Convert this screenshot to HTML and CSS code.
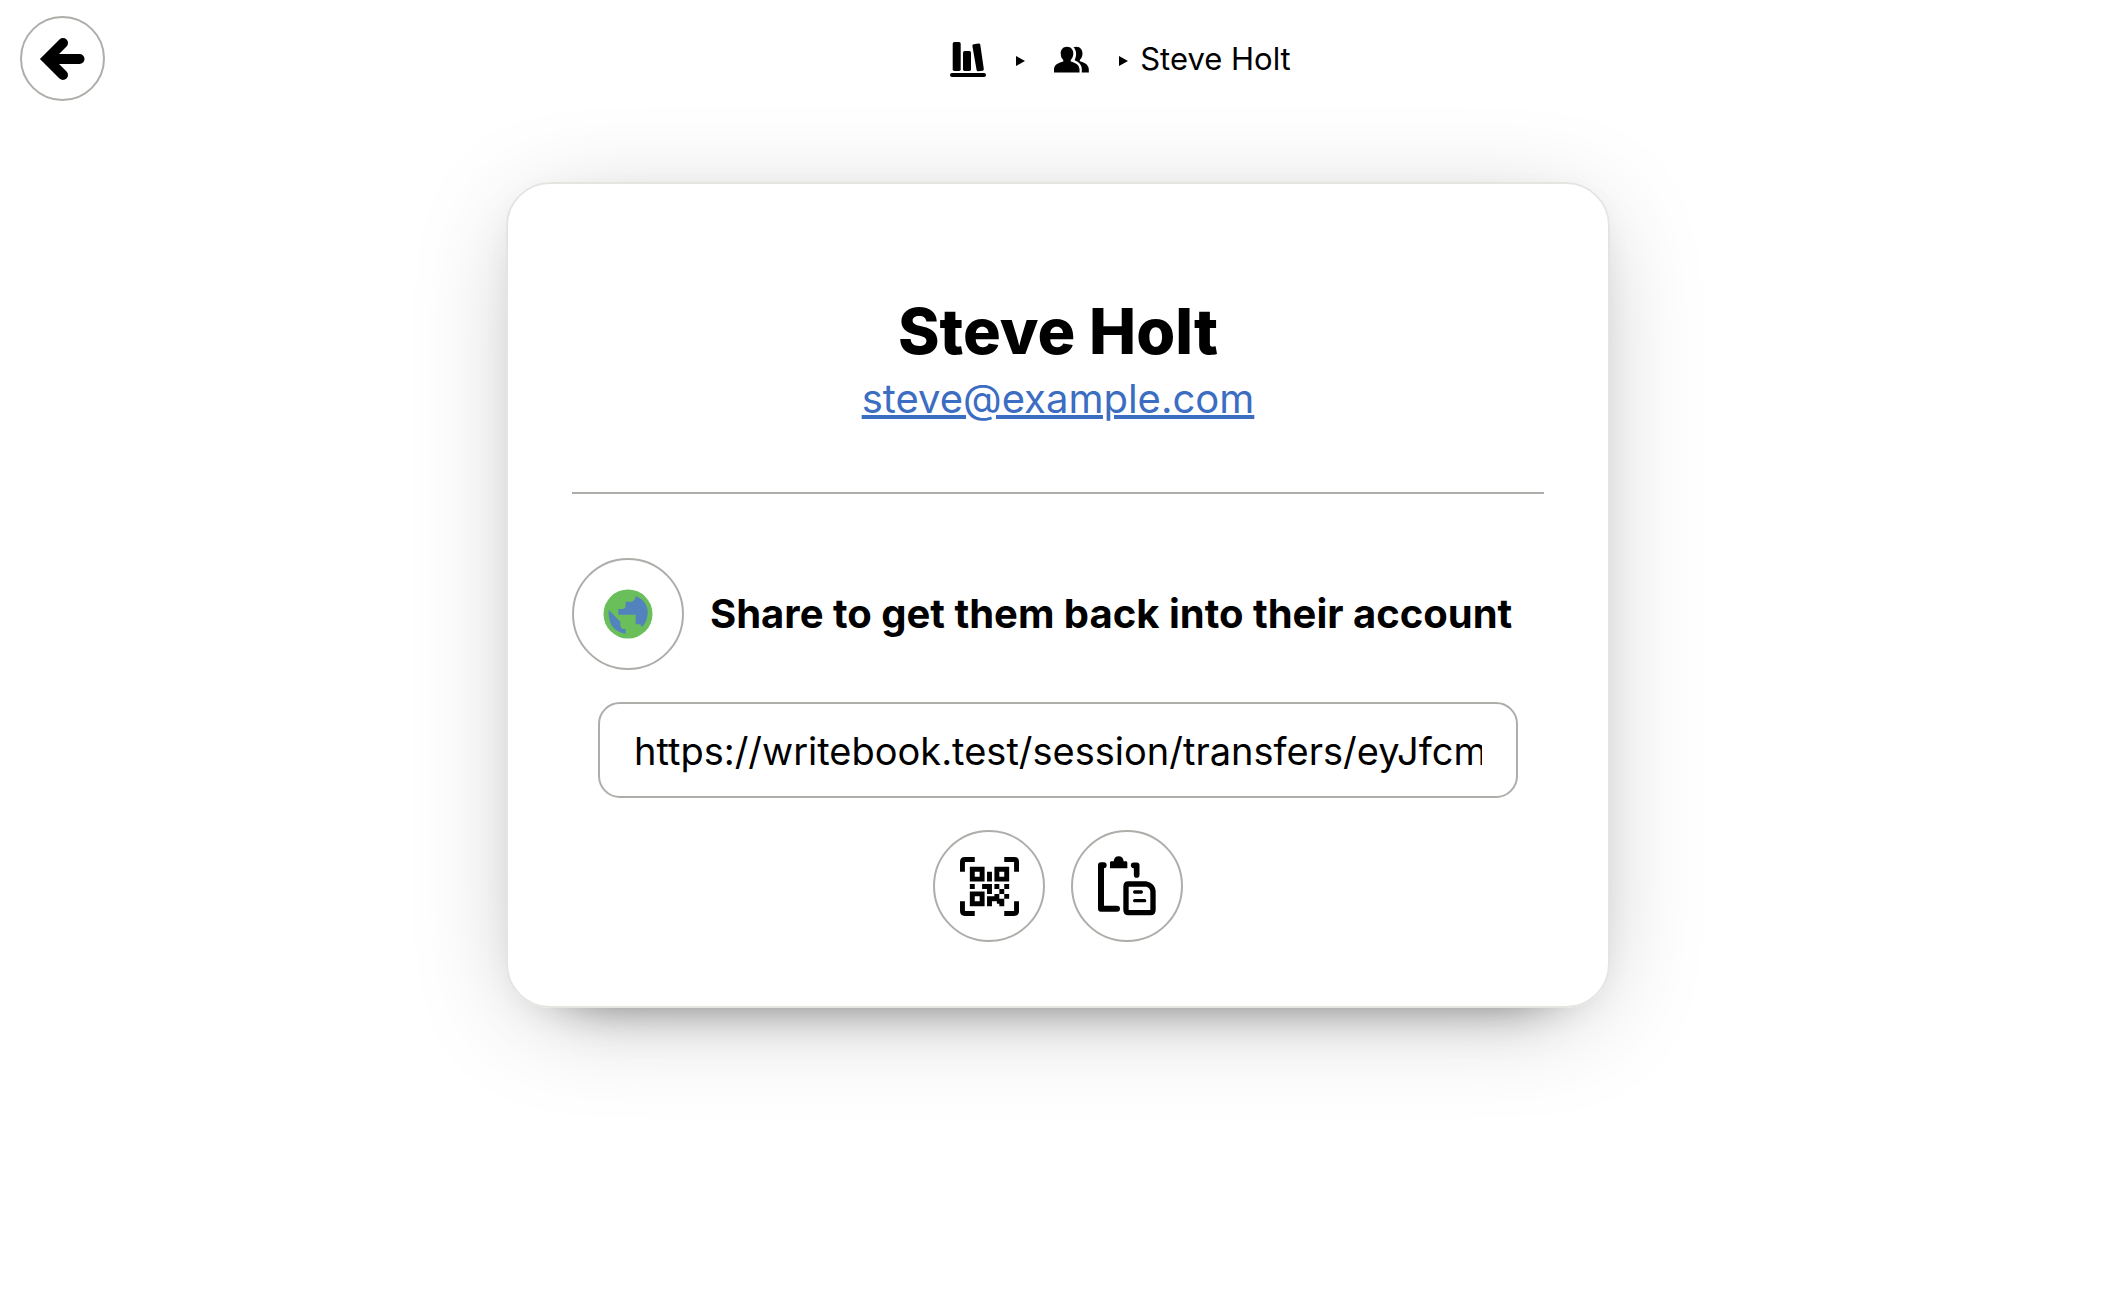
FILE: index.html
```html
<!DOCTYPE html>
<html lang="en">
<head>
  <meta charset="UTF-8">
  <meta name="viewport" content="width=device-width, initial-scale=1.0">
  <title>Steve Holt</title>
  <link rel="stylesheet" href="styles.css">
</head>
<body>
  <header class="header">
    <a href="#" class="btn btn-back" aria-label="Go back">
      <svg width="48" height="48" viewBox="0 0 48 48" fill="none" stroke="currentColor" stroke-width="10" stroke-linecap="round">
        <path d="M24 8 8 24l16 16M12 24h28.500"/>
      </svg>
    </a>
    <nav class="breadcrumbs">
      <a href="#" class="crumb" aria-label="Library">
        <svg width="44" height="44" viewBox="0 0 44 44" fill="currentColor">
          <rect x="6.700" y="5" width="8" height="29" rx="1.700"/>
          <rect x="17" y="14" width="8" height="20" rx="1.700"/>
          <path d="M27.800 7.200 32.500 6.500q1.600-.2 1.800 1.300l3.500 24.200q.2 1.500-1.300 1.700l-4.200.5q-1.500.2-1.700-1.300L26.400 8.900q-.2-1.500 1.400-1.700z"/>
          <rect x="4" y="36" width="36" height="4" rx="2"/>
        </svg>
      </a>
      <svg class="separator" width="9" height="10" viewBox="0 0 9 10" fill="currentColor"><path d="M0 0v10l9-5z"/></svg>
      <a href="#" class="crumb" aria-label="People">
        <svg width="44" height="44" viewBox="0 0 44 44" fill="currentColor">
          <path d="M18 9.700c4 0 6.300 2.800 6.300 6.800 0 3-1.300 5.200-2.600 6.500v1.500c5 1.400 8.800 3.500 8.800 8v3H5v-3c0-4.500 4-6.600 9.300-8V23c-1.500-1.300-2.600-3.500-2.600-6.500 0-4 2.300-6.800 6.300-6.800z"/>
          <path d="M24.500 10.300c5.200-2 9 1.300 9 6.200 0 3-1.300 5.200-2.700 6.500v1.200c5 1.400 9 3.500 9 8.300v3h-7v-3c0-4.800-2.800-7.500-7.200-9.300 2.200-4.300 2.200-9.600-1.100-12.900z"/>
        </svg>
      </a>
      <svg class="separator" width="9" height="10" viewBox="0 0 9 10" fill="currentColor"><path d="M0 0v10l9-5z"/></svg>
      <span class="current">Steve Holt</span>
    </nav>
  </header>

  <main class="panel">
    <div class="profile">
      <h1>Steve Holt</h1>
      <a href="mailto:steve@example.com">steve@example.com</a>
    </div>

    <hr class="divider">

    <div class="share">
      <div class="share-title">
        <span class="btn">
          <svg width="50" height="50" viewBox="0 0 150 150">
            <circle cx="75" cy="75" r="73.500" fill="#6abf5b"/>
            <path fill="#5383bd" d="M98 21q38 16 36 53-1 22-17 41l-5-9H98V77H46V60h12q9 0 10-8V38h17q12-3 13-17zM17 62l35 36v12q2 9 8 10h8v14Q13 125 17 62z"/>
          </svg>
        </span>
        <label for="transfer_url">Share to get them back into their account</label>
      </div>
      <input type="text" id="transfer_url" class="input" value="https://writebook.test/session/transfers/eyJfcmFpbHMiOnsiZGF0YSI6" readonly>
      <div class="actions">
        <button type="button" class="btn" aria-label="Show QR code">
          <svg width="59" height="59" viewBox="0 0 12 12" fill="currentColor">
            <path d="M0 3V1q0-1 1-1h2v1H1v2zM9 0h2q1 0 1 1v2h-1V1H9zM12 9v2q0 1-1 1H9v-1h2V9zM3 12H1q-1 0-1-1V9h1v2h2z"/>
            <path fill-rule="evenodd" d="M2 2h3v3H2zm1 1v1h1V3zM7 2h3v3H7zm1 1v1h1V3zM2 7h3v3H2zm1 1v1h1V8z"/>
            <path d="M5.500 3h1v2h-1zM2 5.500h1v1H2zM4.500 5.500h2v2h-1v-1h-1zM7 5.500h1v1H7zM9 5.500h1v1H9zM8 6.500h1v1H8zM7 7.500h1v1h1v1H8v-.5H6.500v1h-1v-2H7zM9 7.500h1v1H9zM8 9h1v1H8v-.5h-.5V9z"/>
          </svg>
        </button>
        <button type="button" class="btn" aria-label="Copy link">
          <svg width="60" height="60" viewBox="0 0 180 180" fill="none" stroke="currentColor" stroke-linecap="round" stroke-linejoin="round">
            <path stroke-width="18" d="M20 28H12v130h48"/>
            <path stroke-width="17" d="M110 28h9v29"/>
            <path fill="currentColor" stroke="none" d="M39 20q0-4 4-4h7q2-15 15-15t15 15h7q4 0 4 4v17H39z"/>
            <path stroke-width="16" d="M94 84h54q18 4 20 22v56q0 8-8 8H94q-7 0-7-8V92q0-8 7-8z"/>
            <path stroke-width="10" d="M113 108h20M113 134h30"/>
          </svg>
        </button>
      </div>
    </div>
  </main>
</body>
</html>
```
FILE: styles.css
```css
* {
  box-sizing: border-box;
}

body {
  min-height: 100vh;
  margin: 0;
  background: #fff;
  color: #000;
  font-family: Inter, "Liberation Sans", sans-serif;
  font-size: 40px;
  line-height: 1.4;
}

svg {
  display: block;
}

.header {
  display: flex;
  align-items: center;
  padding: 16px 0 16px 20px;
}

.breadcrumbs {
  flex: 1;
  display: flex;
  align-items: center;
  justify-content: center;
  padding-left: 16px;
  font-size: 31px;
}

.crumb {
  color: inherit;
}

.separator {
  margin: 4px 24px 0 26px;
}

.current {
  margin-left: -12px;
}

.btn {
  display: flex;
  flex-shrink: 0;
  align-items: center;
  justify-content: center;
  width: 112px;
  height: 112px;
  padding: 0;
  border: 2px solid #adada9;
  border-radius: 50%;
  background: #fff;
  color: #000;
}

.btn-back {
  width: 85px;
  height: 85px;
}

.panel {
  width: 1104px;
  max-width: 100%;
  margin: 65px auto 0;
  padding: 110px 64px 64px;
  border: 2px solid #e4e4e1;
  border-radius: 44px;
  box-shadow:
    0 18px 112px -24px rgba(0, 0, 0, 0.28),
    0 10px 40px -20px rgba(0, 0, 0, 0.16),
    0 60px 48px -68px rgba(0, 0, 0, 0.4);
}

.profile {
  text-align: center;
  line-height: 62px;
}

.profile h1 {
  margin: 0;
  font-size: 63px;
  font-weight: 800;
  line-height: 74px;
}

.profile a {
  color: #3b6dc2;
  text-decoration-thickness: 4px;
}

.divider {
  margin: 62px 0 64px;
  border: 0;
  border-top: 2px solid #adada9;
}

.share {
  display: flex;
  flex-direction: column;
  gap: 32px;
}

.share-title {
  display: flex;
  align-items: center;
  gap: 26px;
  font-weight: 700;
  white-space: nowrap;
}

.input {
  height: 96px;
  margin: 0 26px;
  padding: 2px 34px 0;
  border: 2px solid #adada9;
  border-radius: 22px;
  background: #fff;
  color: inherit;
  font: inherit;
  font-size: 38px;
}

.actions {
  display: flex;
  justify-content: center;
  gap: 26px;
}
```
